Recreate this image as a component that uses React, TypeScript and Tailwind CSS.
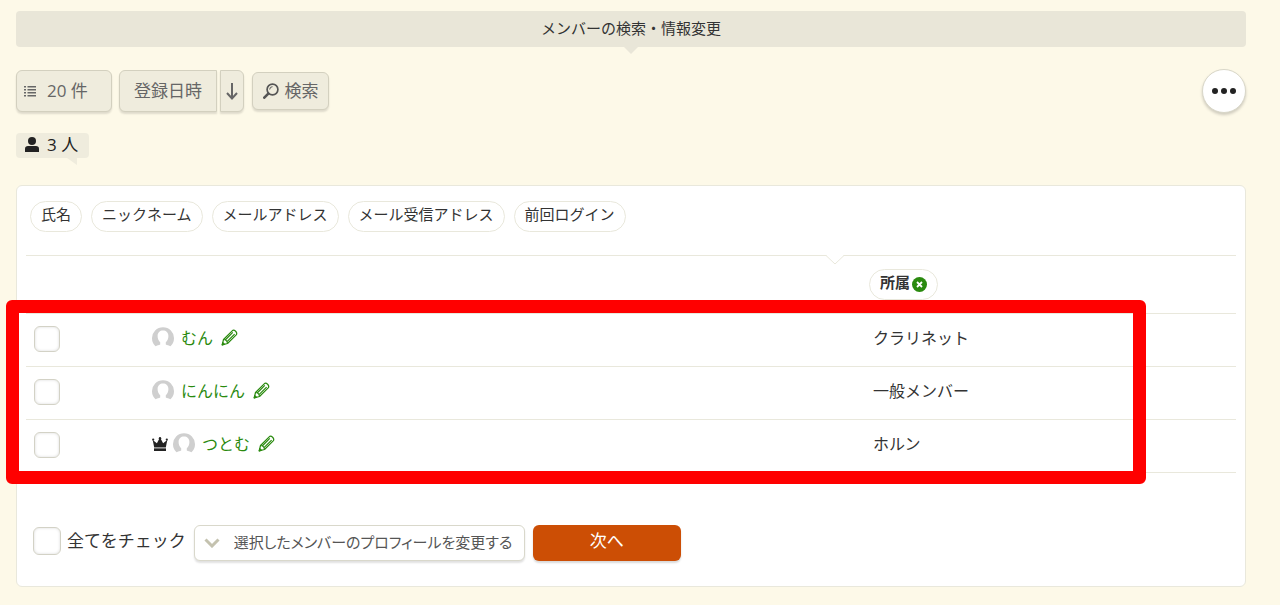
import type { ReactNode } from "react"
import clsx from "clsx"

type Member = {
    name: string
    part: string
    owner?: boolean
}

const columns = ["氏名", "ニックネーム", "メールアドレス", "メール受信アドレス", "前回ログイン"]

const members: Member[] = [
    { name: "むん", part: "クラリネット" },
    { name: "にんにん", part: "一般メンバー" },
    { name: "つとむ", part: "ホルン", owner: true },
]

const toolButton = "border border-[#d3d0bf] bg-[#efecdd] text-[17px] text-[#666] shadow-[0_2px_2px_rgba(0,0,0,0.12)]"

const ListIcon = () => (
    <svg width="12" height="12" viewBox="0 0 12 12" fill="#666">
        <path d="M0 1h2v1.500H0zM0 4h2v1.500H0zM0 7h2v1.500H0zM0 10h2v1.500H0zM3.500 1H12v1.500H3.500zM3.500 4H12v1.500H3.500zM3.500 7H12v1.500H3.500zM3.500 10H12v1.500H3.500z" />
    </svg>
)

const ArrowDownIcon = () => (
    <svg width="12" height="17" viewBox="0 0 12 17" fill="none" stroke="#666" strokeWidth="2">
        <path d="M6 0v15M1 10l5 5.500 5-5.500" />
    </svg>
)

const SearchIcon = () => (
    <svg width="16" height="16" viewBox="0 0 16 16" fill="none" stroke="#555">
        <circle cx="9.500" cy="6.500" r="5.400" strokeWidth="1.700" />
        <path d="M6.700 6.500a2.800 2.800 0 0 1 2.800-2.800" strokeWidth="1" />
        <path d="M5.300 10.700l-4 4" strokeWidth="2.600" strokeLinecap="round" />
    </svg>
)

const PersonIcon = () => (
    <svg width="14" height="15" viewBox="0 0 14 15" fill="#222">
        <circle cx="7" cy="4" r="4" />
        <path d="M0 15v-3.200C0 9.900 1.200 9 3 9h8c1.800 0 3 .9 3 2.800V15z" />
    </svg>
)

const CrownIcon = () => (
    <svg width="16" height="14" viewBox="0 0 16 14" fill="#222">
        <circle cx="1.200" cy="2.600" r="1.100" />
        <circle cx="8" cy="1.200" r="1.200" />
        <circle cx="14.800" cy="2.600" r="1.100" />
        <path d="M.7 3l4.200 3.200L7.400 1.500h1.200l2.500 4.700L15.300 3l-1.500 7.600H2.200zM2 11.200h12V14H2z" />
        <path d="M2 11h12" stroke="#aaa" strokeWidth=".6" />
    </svg>
)

const AvatarIcon = () => (
    <svg width="22" height="22" viewBox="0 0 22 22">
        <path
            d="M3.500 19.200A11 11 0 1 1 18.500 19.200C17 18.600 15 18.300 13.800 17.600V15.200C15.500 14 16.400 11.500 16.400 9 16.400 5.500 14 3.500 11 3.500S5.600 5.500 5.600 9c0 2.500.9 5 2.600 6.200v2.400C7 18.300 5 18.600 3.500 19.200z"
            fill="#cfcfcf"
        />
    </svg>
)

const PencilIcon = () => (
    <svg width="17" height="17" viewBox="0 0 17 17" fill="none" stroke="#2a8a0f" strokeWidth="1.200" strokeLinejoin="round">
        <path d="M1.200 15.800l1.300-5.300 8.700-8.700c1.900-1.900 5.800 1.800 4 4l-8.700 8.700z" />
        <path d="M2.500 10.500c1.900.2 3.800 2 4 4M4.200 11l7.600-7.600M6 12.700l7.600-7.600" />
        <path d="M1.200 15.800l.6-2.200 1.600 1.600z" fill="#2a8a0f" />
    </svg>
)

const Chip = ({ children, active }: { children: ReactNode; active?: boolean }) => (
    <button
        className={clsx(
            "flex h-[31px] items-center rounded-full border border-[#e9e8dc] bg-white px-[10px] pb-1 text-[15px] text-[#333]",
            active && "gap-0.5 font-bold",
        )}
    >
        {children}
    </button>
)

const Check = ({ label, className }: { label?: string; className?: string }) => (
    <input
        type="checkbox"
        aria-label={label}
        className={clsx(
            "block shrink-0 appearance-none rounded-md border border-[#d3d2c6] bg-white shadow-[inset_0_0_3px_rgba(0,0,0,0.15)] checked:bg-[#2a8a0f]",
            className ?? "size-[26px]",
        )}
    />
)

const Toolbar = () => (
    <div className="mt-[22px] flex items-center justify-between">
        <div className="flex items-center">
            <div className="relative">
                <span className="pointer-events-none absolute top-[15px] left-2">
                    <ListIcon />
                </span>
                <select aria-label="表示件数" className={clsx(toolButton, "block h-[42px] w-24 appearance-none rounded-md pl-[30px]")}>
                    <option>20 件</option>
                </select>
            </div>
            <select aria-label="並び順" className={clsx(toolButton, "ml-[7px] h-[42px] w-[98px] appearance-none rounded-l-md pl-[14px]")}>
                <option>登録日時</option>
            </select>
            <button aria-label="降順" className={clsx(toolButton, "ml-[3px] flex h-[42px] w-6 items-center justify-center rounded-r-md")}>
                <ArrowDownIcon />
            </button>
            <button className={clsx(toolButton, "ml-2 flex h-[38px] w-[77px] items-center justify-center gap-1.5 rounded-md")}>
                <SearchIcon />
                検索
            </button>
        </div>
        <button
            aria-label="メニュー"
            className="flex size-11 items-center justify-center gap-[3px] rounded-full border border-[#d9d7c9] bg-white shadow-[0_2px_3px_rgba(0,0,0,0.18)]"
        >
            <span className="size-1.5 rounded-full bg-[#222]" />
            <span className="size-1.5 rounded-full bg-[#222]" />
            <span className="size-1.5 rounded-full bg-[#222]" />
        </button>
    </div>
)

const MemberTable = () => (
    <div className="relative mx-[9px]">
        <table className="w-full table-fixed border-collapse text-base text-[#333]">
            <thead>
                <tr className="h-[57px] border-b border-[#e9e8dc]">
                    <th className="w-[10%]" />
                    <th className="w-[59%]" />
                    <th className="pl-2">
                        <Chip active>
                            所属
                            <svg width="15" height="15" viewBox="0 0 15 15" className="mt-1">
                                <circle cx="7.500" cy="7.500" r="7.500" fill="#2a8a0f" />
                                <path d="M5 5l5 5M10 5l-5 5" stroke="#fff" strokeWidth="1.800" />
                            </svg>
                        </Chip>
                    </th>
                </tr>
            </thead>
            <tbody>
                {members.map((member) => (
                    <tr key={member.name} className="h-[53px] border-b border-[#e9e8dc]">
                        <td className="pb-0.5 pl-2">
                            <Check label={member.name} />
                        </td>
                        <td className="pb-1 pl-[5px]">
                            <div className="flex items-center">
                                {member.owner && <CrownIcon />}
                                <span className={clsx(member.owner && "ml-[5px]")}>
                                    <AvatarIcon />
                                </span>
                                <a href="#" className="ml-[7px] text-[#2a8a0f]">
                                    {member.name}
                                </a>
                                <a href="#" aria-label="編集" className="ml-2">
                                    <PencilIcon />
                                </a>
                            </div>
                        </td>
                        <td className="pb-1 pl-3">{member.part}</td>
                    </tr>
                ))}
            </tbody>
        </table>
        <div className="pointer-events-none absolute top-[44px] right-[90px] -bottom-[11px] -left-[20px] rounded-md border-[13px] border-[#f00]" />
    </div>
)

export default function App() {
    return (
        <div className="min-h-screen bg-[#fdf9e8] pt-[11px] pr-[34px] pb-4 pl-4 font-['Open_Sans','Noto_Sans_CJK_JP',sans-serif] text-[#333]">
            <header className="relative flex h-9 items-center justify-center rounded bg-[#e9e6d8] pb-0.5">
                <h1 className="text-[15px]">メンバーの検索・情報変更</h1>
                <svg width="14" height="7" viewBox="0 0 14 7" className="absolute top-full left-1/2 -translate-x-1/2">
                    <path d="M0 0h14L7 7z" fill="#e9e6d8" />
                </svg>
            </header>

            <Toolbar />

            <div className="relative mt-5 flex h-[25px] w-[73px] items-center gap-2 rounded-sm bg-[#efecdd] pb-0.5 pl-[9px] text-[17px] text-[#222]">
                <PersonIcon />
                3 人
                <svg width="10" height="7" viewBox="0 0 10 7" className="absolute top-full left-[51px]">
                    <path d="M0 0h10v7z" fill="#efecdd" />
                </svg>
            </div>

            <main className="mt-[27px] rounded-md border border-[#e9e8dc] bg-white pt-[15px] pb-[25px]">
                <div className="flex flex-wrap gap-[9px] pr-3 pl-[13px]">
                    {columns.map((column) => (
                        <Chip key={column}>{column}</Chip>
                    ))}
                </div>

                <div className="relative mx-[9px] mt-[23px] border-t border-[#e9e8dc]">
                    <svg width="20" height="10" viewBox="0 0 20 10" className="absolute -top-px left-[66%]">
                        <path d="M1 0h18l-9 9z" fill="#fff" />
                        <path d="M0 .5h1l9 8.500 9-8.500h1" fill="none" stroke="#e9e8dc" />
                    </svg>
                </div>
                <MemberTable />

                <div className="mt-[52px] flex items-center pl-4">
                    <label className="flex items-center gap-1.5 pb-1 text-[17px]">
                        <Check className="size-7" />
                        全てをチェック
                    </label>
                    <div className="relative ml-2">
                        <svg
                            width="16"
                            height="10"
                            viewBox="0 0 16 10"
                            fill="none"
                            stroke="#c4c2af"
                            strokeWidth="3"
                            className="pointer-events-none absolute top-[13px] left-[10px]"
                        >
                            <path d="M1.500 1.500L8 8l6.500-6.500" />
                        </svg>
                        <select
                            aria-label="操作"
                            className="block h-9 w-[331px] appearance-none rounded-md border border-[#d9d8cb] bg-white pl-[39px] text-[15px] text-[#555] shadow-[0_2px_2px_rgba(0,0,0,0.12)] [font-feature-settings:'palt']"
                        >
                            <option>選択したメンバーのプロフィールを変更する</option>
                        </select>
                    </div>
                    <button className="ml-2 h-9 w-[148px] rounded-md bg-[#cc4e05] pb-1 text-[17px] text-white shadow-[0_2px_2px_rgba(0,0,0,0.15)]">
                        次へ
                    </button>
                </div>
            </main>
        </div>
    )
}
